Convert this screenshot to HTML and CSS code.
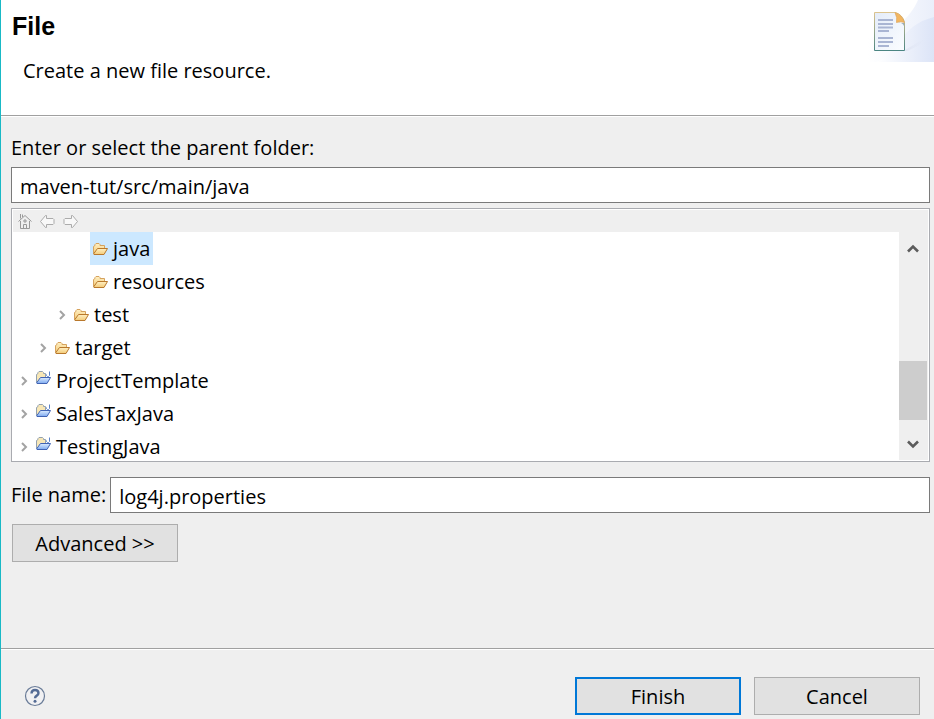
FILE: index.html
```html
<!DOCTYPE html>
<html lang="en">
<head>
<meta charset="utf-8">
<title>New File</title>
<link rel="stylesheet" href="styles.css">
</head>
<body>
<svg class="defs" aria-hidden="true">
  <defs>
    <linearGradient id="gold" x1="0" y1="0" x2="0" y2="1"><stop offset="0" stop-color="#fff0c4"/><stop offset="1" stop-color="#f3cb78"/></linearGradient>
    <linearGradient id="blue" x1="0" y1="0" x2="0" y2="1"><stop offset="0" stop-color="#dcecff"/><stop offset="1" stop-color="#7eaaf0"/></linearGradient>
    <symbol id="folder" viewBox="0 0 15 12">
      <path d="M.5 10.500V3.500L2 2.500V1.500L3 .5h3L7 1.500v1h4.500v3" fill="url(#gold)" stroke="#d6a35e"/>
      <path d="M.5 11L4.500 5.500h10L11 11.500H1z" fill="url(#gold)" stroke="#b9782c"/>
    </symbol>
    <symbol id="project" viewBox="0 0 15 13">
      <path d="M.5 11.500V3.500L2 2.500V1.500L3 .5h3.500l1 1v1h2v4" fill="#f8e7b6" stroke="#93a1af"/>
      <path d="M.5 12L4.500 6.500h10L11 12.500H1z" fill="url(#blue)" stroke="#4063b4"/>
      <path d="M10.500 3.500v1l1 1h1l1-1V.5" fill="none" stroke="#5b83c8"/>
    </symbol>
    <symbol id="expand" viewBox="0 0 7 10"><path d="M1 1l4 4-4 4" fill="none" stroke="#a3a3a3" stroke-width="2"/></symbol>
  </defs>
</svg>
<header class="banner">
  <div class="banner-text">
    <h1>File</h1>
    <p>Create a new file resource.</p>
  </div>
  <svg class="banner-art" viewBox="0 0 66 62" aria-hidden="true">
    <defs>
      <linearGradient id="sky" x1="0" y1="0" x2="1" y2="0"><stop offset="0" stop-color="#fff"/><stop offset="1" stop-color="#dce4f7"/></linearGradient>
      <linearGradient id="shade" x1="0" y1="0" x2="1" y2="0"><stop offset="0" stop-color="#b9bdd0"/><stop offset="1" stop-color="#dfe5f6" stop-opacity="0"/></linearGradient>
      <linearGradient id="paper" x1="0" y1="0" x2="1" y2="1"><stop offset="0" stop-color="#e4ecf9"/><stop offset="1" stop-color="#fbfdff"/></linearGradient>
      <linearGradient id="edge" x1="0" y1="0" x2="0" y2="1"><stop offset="0" stop-color="#dcc48f"/><stop offset="1" stop-color="#4b8582"/></linearGradient>
    </defs>
    <path d="M0 62V38C22 35 42 19 50 0h16v62z" fill="url(#sky)" opacity=".6"/>
    <path d="M8 62C34 52 30 26 66 17v45z" fill="url(#sky)"/>
    <path d="M37 50L59 37 50 46 39 51H5z" fill="url(#shade)"/>
    <path d="M6.500 12.500h21q7 2 9 10v28h-30z" fill="url(#paper)" stroke="url(#edge)"/>
    <path d="M27 12.500q7 2 9.500 10-4-1.500-8 0 1-5-1.500-10z" fill="#f3b660" stroke="#dfa557" stroke-width=".7"/>
    <path d="M30 23q4-1 6 3v-3z" fill="#9babb8"/>
    <path d="M10 20h15M10 24h15M10 27.500h15M10 31h11M10 38h15M10 42h15M10 46h11" stroke="#a9b5d3" stroke-width="1.800"/>
  </svg>
</header>
<main class="content">
  <label class="folder-label" for="parent">Enter or select the parent folder:</label>
  <input id="parent" class="field" type="text" value="maven-tut/src/main/java">
  <section class="browser" aria-label="Folders">
    <div class="toolbar">
      <button type="button" aria-label="Home"><svg width="14" height="16" viewBox="0 0 14 16"><path d="M2.500 8v7.500h9V8M.5 8.500l6.500-6 6.500 6M2.500 5.500V1M4.500 4V1.500M5.500 15.500v-4h3v4M6 7h2v2H6z" fill="none" stroke="#999"/></svg></button>
      <button type="button" aria-label="Back"><svg width="15" height="13" viewBox="0 0 15 13"><path d="M.5 6.500l5-6h1v3h6.500l1 1v4l-1 1H6.500v3h-1z" fill="#f8f8f8" stroke="#ababab"/></svg></button>
      <button type="button" aria-label="Forward"><svg width="15" height="13" viewBox="0 0 15 13"><path d="M14.500 6.500l-5-6h-1v3H2l-1 1v4l1 1h6.500v3h1z" fill="#f8f8f8" stroke="#ababab"/></svg></button>
    </div>
    <div class="viewport">
      <ul class="tree" role="tree">
        <li class="level-3" role="treeitem" aria-selected="true"><span class="toggle"></span><span class="node selected"><svg class="folder"><use href="#folder"/></svg>java</span></li>
        <li class="level-3" role="treeitem"><span class="toggle"></span><span class="node"><svg class="folder"><use href="#folder"/></svg>resources</span></li>
        <li class="level-2" role="treeitem"><span class="toggle"><svg><use href="#expand"/></svg></span><span class="node"><svg class="folder"><use href="#folder"/></svg>test</span></li>
        <li class="level-1" role="treeitem"><span class="toggle"><svg><use href="#expand"/></svg></span><span class="node"><svg class="folder"><use href="#folder"/></svg>target</span></li>
        <li role="treeitem"><span class="toggle"><svg><use href="#expand"/></svg></span><span class="node"><svg class="project"><use href="#project"/></svg>ProjectTemplate</span></li>
        <li role="treeitem"><span class="toggle"><svg><use href="#expand"/></svg></span><span class="node"><svg class="project"><use href="#project"/></svg>SalesTaxJava</span></li>
        <li role="treeitem"><span class="toggle"><svg><use href="#expand"/></svg></span><span class="node"><svg class="project"><use href="#project"/></svg>TestingJava</span></li>
      </ul>
      <div class="scrollbar">
        <button type="button" aria-label="Scroll up"><svg width="12" height="9" viewBox="0 0 12 9"><path d="M1 7.500l5-5 5 5" fill="none" stroke="#5c5c5c" stroke-width="2.600"/></svg></button>
        <div class="track"><div class="thumb"></div></div>
        <button type="button" aria-label="Scroll down"><svg width="12" height="9" viewBox="0 0 12 9"><path d="M1 1.500l5 5 5-5" fill="none" stroke="#5c5c5c" stroke-width="2.600"/></svg></button>
      </div>
    </div>
  </section>
  <div class="name-row">
    <label for="name">File name:</label>
    <input id="name" class="field" type="text" value="log4j.properties">
  </div>
  <button type="button" class="button advanced">Advanced &gt;&gt;</button>
</main>
<footer class="actions">
  <button type="button" class="help" aria-label="Help"><svg width="22" height="22" viewBox="0 0 22 22"><circle cx="11" cy="11" r="9.500" fill="#f1f1f3" stroke="#6a7c98" stroke-width="1.200"/><path d="M7.500 8.500Q7.700 5 11 5t3.500 3q0 1.600-1.700 2.600T11 13.200" fill="none" stroke="#546b94" stroke-width="2.400"/><circle cx="11" cy="16.300" r="1.500" fill="#546b94"/></svg></button>
  <button type="button" class="button primary">Finish</button>
  <button type="button" class="button">Cancel</button>
</footer>
</body>
</html>
```
FILE: styles.css
```css
* { box-sizing: border-box; }

body {
  margin: 0;
  min-height: 100vh;
  display: flex;
  flex-direction: column;
  border-left: 1px solid #19b9c6;
  background: #efefef;
  color: #000;
  font: 20px/26px "Open Sans", "Noto Sans", sans-serif;
}

button, input { font: inherit; color: inherit; }
svg { display: block; flex: none; }
.defs { position: absolute; width: 0; height: 0; }

.banner {
  display: flex;
  justify-content: space-between;
  align-items: flex-start;
  min-height: 117px;
  background: #fff;
  border-bottom: 1px solid #fff;
  box-shadow: inset 0 -1px #a0a0a0;
}
.banner-text { padding: 12px 11px; }
.banner h1 {
  margin: 0;
  font: bold 25px/28px "Liberation Sans", sans-serif;
}
.banner p { margin: 18px 0 0 11px; }
.banner-art { width: 66px; height: 62px; }

.content {
  flex: 1;
  display: flex;
  flex-direction: column;
  padding: 18px 4px 20px 10px;
}
.folder-label { margin-bottom: 6px; }
.field {
  width: 100%;
  min-width: 0;
  height: 36px;
  padding: 2px 8px 0;
  border: 1px solid #7a7a7a;
  border-radius: 0;
  background: #fff;
}

.browser {
  margin-top: 5px;
  padding: 1px;
  border: 1px solid #a9abb0;
  background: #fff;
}
.toolbar {
  display: flex;
  align-items: center;
  gap: 8px;
  height: 22px;
  padding-left: 5px;
  background: #efefef;
}
.toolbar button, .scrollbar button, .help {
  display: grid;
  place-items: center;
  padding: 0;
  border: 0;
  background: none;
}
.viewport { display: flex; height: 228px; overflow: hidden; }
.tree {
  flex: 1;
  margin: 0;
  padding: 0;
  list-style: none;
}
.tree li { display: flex; height: 33px; padding-left: 8px; }
.tree .level-1 { padding-left: 27px; }
.tree .level-2 { padding-left: 46px; }
.tree .level-3 { padding-left: 65px; }
.toggle { display: flex; align-items: center; width: 12px; }
.toggle svg { width: 7px; height: 10px; }
.node {
  display: flex;
  align-items: center;
  gap: 5px;
  padding: 0 3px;
}
.node.selected { background: #cce8ff; }
.node .folder { width: 15px; height: 12px; }
.node .project { width: 15px; height: 13px; margin-bottom: 6px; }

.scrollbar {
  display: flex;
  flex-direction: column;
  width: 29px;
  padding-right: 1px;
  background: #efefef;
}
.scrollbar button { height: 32px; }
.track { flex: 1; display: flex; align-items: flex-end; padding-bottom: 8px; }
.thumb { width: 100%; height: 38%; background: #cdcdcd; }

.name-row {
  display: flex;
  align-items: center;
  gap: 4px;
  margin-top: 15px;
}
.name-row label { flex: none; }

.button {
  width: 166px;
  height: 38px;
  padding: 2px 0 0;
  border: 1px solid #adadad;
  border-radius: 0;
  background: #e1e1e1;
}
.button.primary { border: 2px solid #0078d7; }
.advanced { margin: 11px 0 0 1px; }

.actions {
  display: flex;
  align-items: center;
  gap: 13px;
  padding: 28px 14px 4px 23px;
  border-top: 1px solid #a0a0a0;
  box-shadow: inset 0 1px #fff;
}
.help { margin-right: auto; }
```
